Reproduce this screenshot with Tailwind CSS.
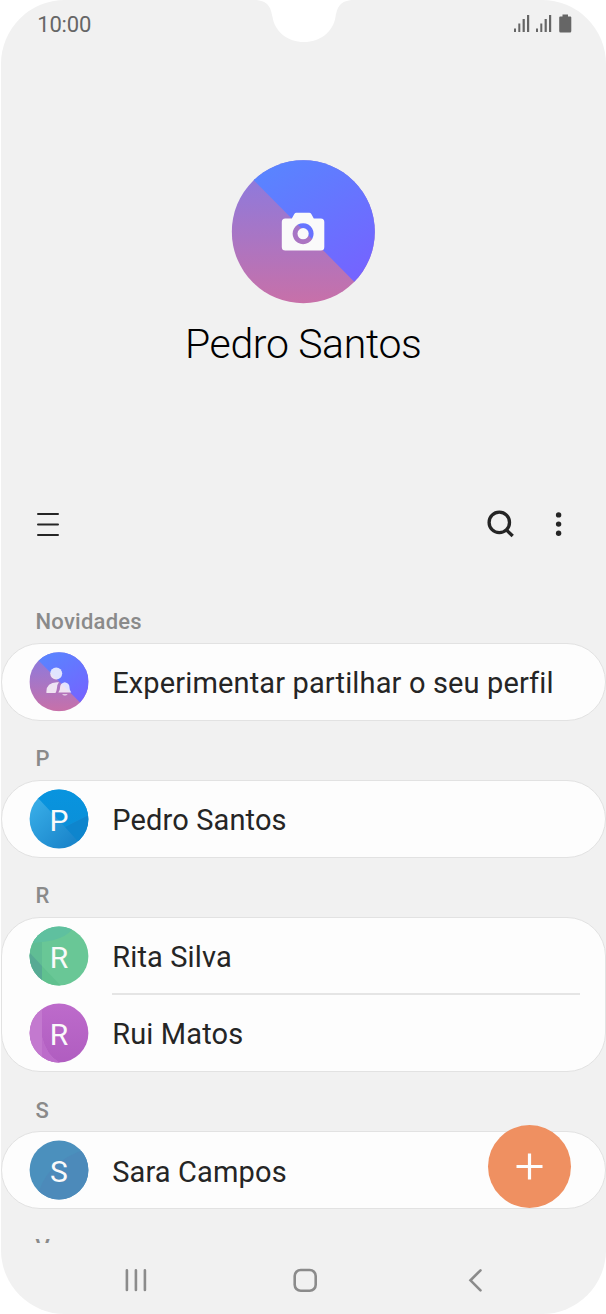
<!DOCTYPE html>
<html lang="pt">
<head>
<meta charset="utf-8">
<title>Contactos</title>
<script src="https://cdn.jsdelivr.net/npm/@tailwindcss/browser@4"></script>
</head>
<body class="bg-white">
<div class="relative w-[606px] h-[1314px] pl-[0.700px] overflow-hidden bg-white font-['Roboto',sans-serif] whitespace-nowrap">
  <div class="flex flex-col h-[1313.500px] w-[605px] bg-[#f1f1f1] rounded-[64px] overflow-hidden">
    <!-- status bar -->
    <header class="h-[48px] shrink-0 flex justify-between pl-[36.500px] pr-[33.700px]">
      <div class="pt-[11px] text-[22px] leading-[28px] tracking-[-0.150px] text-[#666]">10:00</div>
      <svg class="mt-[13px]" width="58" height="21" viewBox="0 0 58 21" fill="#666">
        <path d="M0 15.5h2V19H0zM4.3 10.5h2V19h-2zM8.6 6h2.2v13H8.600zM13 2h2.200v17H13zM22 15.500h2V19h-2zM26.300 10.500h2V19h-2zM30.600 6h2.200v13h-2.200zM35 2h2.200v17H35z"/>
        <path d="M48.500 1.500h5.500v2h2.300q1 0 1 1v13.500q0 1.500-1.300 1.500H46.500q-1.300 0-1.300-1.500V4.500q0-1 1-1h2.300z"/>
      </svg>
    </header>

    <!-- profile -->
    <section class="h-[448px] shrink-0 flex flex-col items-center pt-[112px]">
      <svg width="144" height="144" viewBox="-0.300 0 144 144">
        <defs>
          <linearGradient id="pk" x1="0" y1="0" x2="0" y2="1"><stop offset="0.1" stop-color="#8c7ade"/><stop offset="1" stop-color="#c870a8"/></linearGradient>
          <linearGradient id="bl" x1="0.15" y1="0" x2="0.75" y2="0.9"><stop offset="0" stop-color="#5688ff"/><stop offset="1" stop-color="#7464ff"/></linearGradient>
          <clipPath id="cc"><circle cx="72" cy="71.700" r="71.500"/></clipPath>
          <g id="duo" clip-path="url(#cc)"><rect width="144" height="144" fill="url(#pk)"/><path d="M0 -2.500L144 143V0z" fill="url(#bl)"/></g>
        </defs>
        <use href="#duo"/>
        <path fill="#fafafa" fill-rule="evenodd" d="M54 58.500H60.500L63 54q.7-1.300 2-1.300H78q1.300 0 2 1.300L82.500 58.500H89.500q3.500 0 3.500 3.500V87q0 3.500-3.500 3.500H54q-3.500 0-3.500-3.500V62q0-3.500 3.500-3.500zM71.800 63.200a10.500 10.500 0 1 0 .01 0z"/>
        <circle cx="71.800" cy="73.700" r="5.600" fill="#fafafa"/>
      </svg>
      <h1 class="mt-[16px] text-[41px] leading-[48px] font-light tracking-[-0.350px] text-black">Pedro Santos</h1>
    </section>

    <!-- toolbar -->
    <div class="h-[56px] shrink-0 flex items-center pl-[35px] pr-[43px]">
      <svg width="24" height="26" viewBox="0 0 24 26" stroke="#252525" stroke-width="2" stroke-linecap="round"><path d="M2 3H22M2 13.500H22M2 24H22"/></svg>
      <svg class="ml-auto" width="30" height="30" viewBox="0 0 30 30" fill="none" stroke="#252525" stroke-width="3.300"><circle cx="13.300" cy="13.400" r="10.200"/><path d="M20.300 20.800L26.700 27"/></svg>
      <svg class="ml-[39px]" width="8" height="26" viewBox="0.400 0 8 26" fill="#252525"><circle cx="4" cy="3.900" r="2.700"/><circle cx="4" cy="13.100" r="2.700"/><circle cx="4" cy="22.200" r="2.700"/></svg>
    </div>

    <!-- contacts -->
    <main class="h-[691px] shrink-0 overflow-hidden pt-[31px]">
      <h2 class="h-[60px] pt-[25px] pl-[34.800px] text-[22px] leading-[28px] tracking-[0.250px] font-medium text-[#8a8a8a]">Novidades</h2>
      <div class="h-[78px] rounded-[39px] border border-[#e2e2e2] bg-[#fdfdfd] flex items-center pl-[27.500px]">
        <svg width="60" height="60" viewBox="0 0 60 60">
          <use href="#duo" transform="translate(.3 .2) scale(.4125)"/>
          <g fill="#fff" fill-opacity=".8"><circle cx="27.200" cy="21.500" r="6"/><path d="M17.400 41V39.500Q17.500 30.500 28 30.200h2q-1.800 2-2 5.500-.3 3-1.500 5.300z"/><path d="M29.300 40.500q1.700-1.800 1.700-4.500 0-5 4.800-5.800 4.800.8 4.800 5.800 0 2.700 1.700 4.500zM33 42.200h5.800q-2.900 2.800-5.800 0z"/></g>
        </svg>
        <span class="pl-[23px] pt-px text-[29px] leading-[36px] tracking-[0.140px] text-[#252525]">Experimentar partilhar o seu perfil</span>
      </div>

      <h2 class="h-[59px] pt-[24px] pl-[34.800px] text-[22px] leading-[28px] font-medium text-[#8a8a8a]">P</h2>
      <div class="h-[78px] rounded-[39px] border border-[#e2e2e2] bg-[#fdfdfd] flex items-center pl-[27.500px]">
        <svg width="60" height="60" viewBox="0 0 60 60">
          <defs><clipPath id="c"><circle cx="30" cy="30" r="29.400"/></clipPath>
          <linearGradient id="p1" x1="0" y1="0" x2="1" y2="1"><stop offset=".2" stop-color="#35aae5"/><stop offset=".8" stop-color="#1b86cb"/></linearGradient>
          <linearGradient id="p2" x1="0" y1="0" x2="0" y2="1"><stop stop-color="#0894df"/><stop offset="1" stop-color="#0a90d9"/></linearGradient></defs>
          <g clip-path="url(#c)"><rect width="60" height="60" fill="url(#p1)"/><path d="M0 0L9 9 36 38 60 26V0z" fill="url(#p2)"/><path d="M36 38L60 26V60H56z" fill="#0e85cd"/></g>
          <text x="30" y="42" text-anchor="middle" font-size="30" fill="#fafafa">P</text>
        </svg>
        <span class="pl-[23px] pt-px text-[29px] leading-[36px] tracking-[0.140px] text-[#252525]">Pedro Santos</span>
      </div>

      <h2 class="h-[59px] pt-[24px] pl-[34.800px] text-[22px] leading-[28px] font-medium text-[#8a8a8a]">R</h2>
      <div class="h-[155px] rounded-[39px] border border-[#e2e2e2] bg-[#fdfdfd] pl-[27.500px]">
        <div class="h-[75px] flex items-center pt-px">
          <svg width="60" height="60" viewBox="0 0 60 60">
            <g clip-path="url(#c)"><rect width="60" height="60" fill="#69c796"/><path d="M0 0H13V60H0z" fill="#60bd94"/><path d="M0 0H45Q38 16 0 17z" fill="#5fc09f"/><path d="M0 26L13 40V60H0z" fill="#57aa94"/><path d="M13 40L32 60H13z" fill="#60c18f"/></g>
            <text x="30" y="42" text-anchor="middle" font-size="30" fill="#fafafa">R</text>
          </svg>
          <span class="pl-[23px] pt-px text-[29px] leading-[36px] tracking-[0.140px] text-[#252525]">Rita Silva</span>
        </div>
        <div class="ml-[83px] mr-[25px] h-[2px] bg-[#e5e5e5]"></div>
        <div class="h-[76px] flex items-center">
          <svg width="60" height="60" viewBox="0 0 60 60">
            <defs><linearGradient id="pu" x1="0" y1="0" x2="0" y2="1"><stop stop-color="#bd6bcb"/><stop offset="1" stop-color="#b05dc0"/></linearGradient></defs>
            <g clip-path="url(#c)"><rect width="60" height="60" fill="url(#pu)"/><path d="M0 0H13V34Q17 52 31 60H0z" fill="#c379cf"/><path d="M13 34Q17 52 31 60H13z" fill="#bc6cca"/></g>
            <text x="30" y="42" text-anchor="middle" font-size="30" fill="#fafafa">R</text>
          </svg>
          <span class="pl-[23px] pt-[2px] text-[29px] leading-[36px] tracking-[0.140px] text-[#252525]">Rui Matos</span>
        </div>
      </div>

      <h2 class="h-[59px] pt-[25px] pl-[34.800px] text-[22px] leading-[28px] font-medium text-[#8a8a8a]">S</h2>
      <div class="h-[78px] rounded-[39px] border border-[#e2e2e2] bg-[#fdfdfd] flex items-center pl-[27.500px]">
        <svg width="60" height="60" viewBox="0 0 60 60">
          <g clip-path="url(#c)"><rect width="60" height="60" fill="#4b90bd"/><path d="M8 60Q14 22 60 8V60z" fill="#4c8aba"/></g>
          <text x="30" y="42" text-anchor="middle" font-size="30" fill="#fafafa">S</text>
        </svg>
        <span class="pl-[23px] pt-[3px] text-[29px] leading-[36px] tracking-[0.140px] text-[#252525]">Sara Campos</span>
      </div>
      <h2 class="h-[59px] pt-[25px] pl-[34.800px] text-[22px] leading-[28px] font-medium text-[#8a8a8a]">V</h2>
    </main>

    <!-- navigation -->
    <nav class="h-[70px] shrink-0 flex items-start pt-[24px] pl-[123px]">
      <svg width="24" height="26" viewBox="0 0 24 26" stroke="#8b8b8b" stroke-width="2.600" stroke-linecap="round"><path d="M2.900 3.300V23M11.900 3.300V23M20.900 3.300V23"/></svg>
      <svg class="ml-[144px]" width="26" height="26" viewBox="0 0 26 26" fill="none" stroke="#8b8b8b" stroke-width="2.600"><rect x="2.700" y="3" width="21" height="20.800" rx="6"/></svg>
      <svg class="ml-[150px]" width="18" height="26" viewBox="0 0 18 26" fill="none" stroke="#8b8b8b" stroke-width="2.600" stroke-linecap="round"><path d="M12.500 3.300L2.500 13.300 12.500 23.300"/></svg>
    </nav>
  </div>

  <!-- camera notch -->
  <svg class="absolute left-[254px] top-0" width="100" height="42" viewBox="0 0 100 42" fill="#fff"><path d="M0 0H100C85 0 83 9 81.500 17C79 32 66 42 50 42C34 42 21 32 18.500 17C17 9 15 0 0 0z"/></svg>

  <!-- add contact button -->
  <button class="absolute left-[488px] top-[1125px] size-[83px] rounded-full bg-[#ef9061] flex items-center justify-center">
    <svg width="27" height="27" viewBox="0 0 27 27" stroke="#fdfdfd" stroke-width="3.200"><path d="M13.500 0.500V26.500M0.500 13.500H26.500"/></svg>
  </button>
</div>
</body>
</html>
